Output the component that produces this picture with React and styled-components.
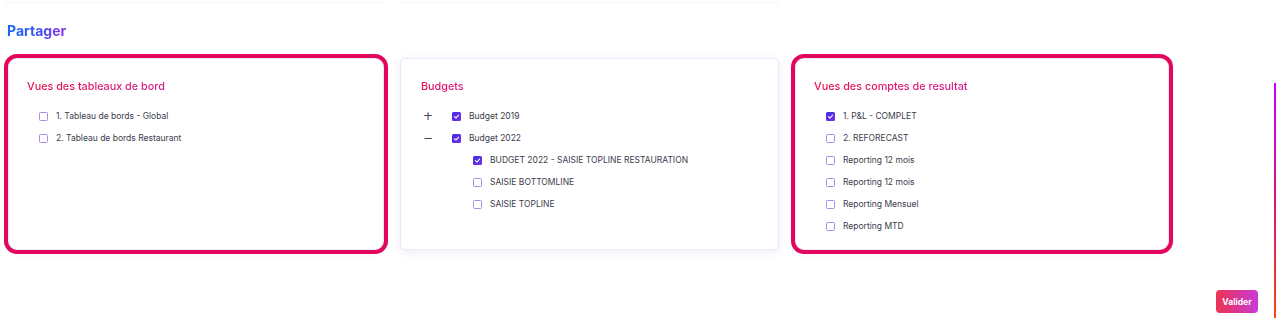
import React, { useState } from 'react';
import styled, { createGlobalStyle } from 'styled-components';

const GlobalStyle = createGlobalStyle`
  body {
    margin: 0;
    background: #ffffff;
    font-family: 'Inter', 'Noto Sans', sans-serif;
  }
`;

const Page = styled.div`
  position: relative;
  width: 1280px;
  height: 324px;
  overflow: hidden;
  box-sizing: border-box;
`;

const TopRow = styled.div`
  display: flex;
  gap: 15px;
  padding-left: 5px;
  height: 2px;
`;

const TopCard = styled.div`
  width: ${({ w }) => w}px;
  height: 1px;
  background: #fff;
  border-radius: 0 0 6px 6px;
  box-shadow: 0 1px 3px rgba(110, 90, 210, 0.16);
`;

const SectionTitle = styled.h2`
  display: block;
  width: fit-content;
  margin: 20px 0 0 7px;
  font-family: 'Inter', sans-serif;
  font-size: 14px;
  line-height: 18px;
  font-weight: 700;
  background: linear-gradient(90deg, #1466f6 0%, #3355f2 45%, #8a2ee6 100%);
  -webkit-background-clip: text;
  background-clip: text;
  color: transparent;
`;

const Cards = styled.div`
  display: grid;
  grid-template-columns: 376px 379px 374px;
  column-gap: 16px;
  align-items: stretch;
  margin-top: 18px;
  padding-left: 8px;
`;

const Card = styled.section`
  box-sizing: border-box;
  background: #fff;
  border: 1px solid #ece9f7;
  border-radius: ${({ active }) => (active ? '9px' : '5px')};
  outline: ${({ active }) => (active ? '4px solid #e2075c' : 'none')};
  box-shadow: 0 2px 8px rgba(110, 90, 210, 0.12);
  padding: 20px 19px 12px ${({ active }) => (active ? '19px' : '21px')};
`;

const CardTitle = styled.h3`
  display: block;
  width: fit-content;
  margin: 0 0 10px -1px;
  font-family: 'Inter', sans-serif;
  font-size: 10.8px;
  line-height: 16px;
  font-weight: 500;
  background: linear-gradient(90deg, #e81048 0%, #d41a8e 100%);
  -webkit-background-clip: text;
  background-clip: text;
  color: transparent;
`;

const List = styled.ul`
  list-style: none;
  margin: 0;
  padding: 0 0 0 ${({ indent }) => indent}px;
`;

const Row = styled.li`
  display: flex;
  align-items: center;
  height: 22px;
  font-size: 8.5px;
  color: #3c3c4c;
`;

const Toggle = styled.button`
  width: 12px;
  height: 12px;
  padding: 0;
  margin-right: 18px;
  border: none;
  background: none;
  cursor: pointer;
  font-family: 'DejaVu Sans', sans-serif;
  font-size: 12px;
  line-height: 12px;
  color: #444455;
  display: flex;
  align-items: center;
  justify-content: center;
`;

const Box = styled.span`
  box-sizing: border-box;
  width: 9px;
  height: 9px;
  margin-right: 8px;
  border-radius: 1.5px;
  flex-shrink: 0;
  display: flex;
  align-items: center;
  justify-content: center;
  border: ${({ checked }) => (checked ? 'none' : '1px solid #a98de8')};
  background: ${({ checked }) =>
    checked ? 'linear-gradient(135deg, #3a2fe4 0%, #7b2de2 100%)' : '#fff'};
`;

const Children = styled.ul`
  list-style: none;
  margin: 0;
  padding: 0 0 0 51px;
`;

const Footer = styled.div`
  display: flex;
  justify-content: flex-end;
  padding-right: 22px;
  margin-top: 40px;
`;

const ValidButton = styled.button`
  width: 42px;
  height: 23px;
  border: none;
  border-radius: 4px;
  background: linear-gradient(90deg, #ec3350 0%, #c93ad6 100%);
  color: #fff;
  font-family: 'Inter', sans-serif;
  font-size: 8.5px;
  font-weight: 700;
  padding: 0;
  cursor: pointer;
`;

const ScrollLine = styled.div`
  position: absolute;
  left: 1274px;
  top: 83px;
  width: 2px;
  height: 235px;
  background: linear-gradient(180deg, #c400ff 0%, #d8157a 50%, #ff4210 100%);
`;

function Check({ checked }) {
  return (
    <Box checked={checked}>
      {checked && (
        <svg width="7" height="7" viewBox="0 0 10 10">
          <path d="M2 5.2 L4.2 7.2 L8 3" fill="none" stroke="#fff" strokeWidth="1.5" strokeLinecap="round" strokeLinejoin="round" />
        </svg>
      )}
    </Box>
  );
}

const dashboards = [
  { label: '1. Tableau de bords - Global', checked: false },
  { label: '2. Tableau de bords Restaurant', checked: false },
];

const budgets = [
  { label: 'Budget 2019', checked: true, children: [] },
  {
    label: 'Budget 2022',
    checked: true,
    open: true,
    children: [
      { label: 'BUDGET 2022 - SAISIE TOPLINE RESTAURATION', checked: true },
      { label: 'SAISIE BOTTOMLINE', checked: false },
      { label: 'SAISIE TOPLINE', checked: false },
    ],
  },
];

const results = [
  { label: '1. P&L - COMPLET', checked: true },
  { label: '2. REFORECAST', checked: false },
  { label: 'Reporting 12 mois', checked: false },
  { label: 'Reporting 12 mois', checked: false },
  { label: 'Reporting Mensuel', checked: false },
  { label: 'Reporting MTD', checked: false },
];

function BudgetNode({ node }) {
  const [open, setOpen] = useState(!!node.open);
  return (
    <>
      <Row>
        <Toggle onClick={() => setOpen(!open)}>{open ? '−' : '+'}</Toggle>
        <Check checked={node.checked} />
        <span>{node.label}</span>
      </Row>
      {open && node.children.length > 0 && (
        <Children>
          {node.children.map((child, i) => (
            <Row key={i}>
              <Check checked={child.checked} />
              <span>{child.label}</span>
            </Row>
          ))}
        </Children>
      )}
    </>
  );
}

export default function App() {
  return (
    <Page>
      <GlobalStyle />
      <TopRow>
        <TopCard w={380} />
        <TopCard w={379} />
      </TopRow>
      <SectionTitle>Partager</SectionTitle>
      <Cards>
        <Card active>
          <CardTitle>Vues des tableaux de bord</CardTitle>
          <List indent={11}>
            {dashboards.map((item, i) => (
              <Row key={i}>
                <Check checked={item.checked} />
                <span>{item.label}</span>
              </Row>
            ))}
          </List>
        </Card>
        <Card>
          <CardTitle>Budgets</CardTitle>
          <List indent={0}>
            {budgets.map((node, i) => (
              <BudgetNode key={i} node={node} />
            ))}
          </List>
        </Card>
        <Card active>
          <CardTitle>Vues des comptes de resultat</CardTitle>
          <List indent={11}>
            {results.map((item, i) => (
              <Row key={i}>
                <Check checked={item.checked} />
                <span>{item.label}</span>
              </Row>
            ))}
          </List>
        </Card>
      </Cards>
      <Footer>
        <ValidButton>Valider</ValidButton>
      </Footer>
      <ScrollLine />
    </Page>
  );
}
